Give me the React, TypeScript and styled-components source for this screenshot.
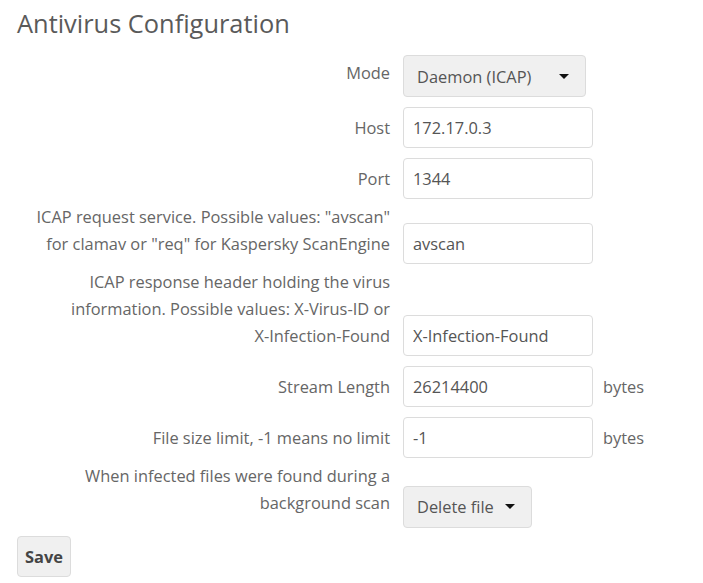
import React from "react";
import styled, { createGlobalStyle } from "styled-components";

const Global = createGlobalStyle`
  html, body { margin: 0; padding: 0; background: #fff; }
  body { font-family: "Open Sans", "Liberation Sans", sans-serif; color: #555; }
  * { box-sizing: border-box; }
`;

const Page = styled.div`
  padding: 4px 17px 0 17px;
`;

const Title = styled.h1`
  margin: 0 0 8px 0;
  font-size: 25.4px;
  line-height: 38px;
  font-weight: 400;
  color: #5a5a5a;
`;

const Form = styled.form`
  display: flex;
  flex-direction: column;
`;

const Row = styled.div`
  display: flex;
  align-items: last baseline;
  padding-left: 18px;
`;

const Label = styled.label`
  flex: 0 0 auto;
  width: 368px;
  margin-top: -1px;
  padding-right: 13px;
  text-align: right;
  font-size: 16.4px;
  line-height: 27px;
  color: #666;
`;

const NoWrap = styled.span`
  white-space: nowrap;
`;

const TextInput = styled.input`
  width: 190px;
  height: 41px;
  margin: 5px 0;
  padding: 0 9px;
  border: 1px solid #dcdcdc;
  border-radius: 4px;
  font-family: "Open Sans", "Liberation Sans", sans-serif;
  font-size: 16.4px;
  color: #555;
  background: #fff;
  outline: none;
`;

const Select = styled.button<{ $w: number }>`
  display: flex;
  align-items: center;
  justify-content: space-between;
  width: ${(p) => p.$w}px;
  height: 42px;
  margin: 5px 0;
  padding: 0 16px 0 13px;
  border: 1px solid #dcdcdc;
  border-radius: 4px;
  background: #f0f0f0;
  font-family: "Open Sans", "Liberation Sans", sans-serif;
  font-size: 16.4px;
  color: #555;
  cursor: pointer;
`;

const Caret = styled.span`
  width: 0;
  height: 0;
  border-left: 5px solid transparent;
  border-right: 5px solid transparent;
  border-top: 5px solid #111;
`;

const Unit = styled.span`
  padding-left: 10px;
  font-size: 16.4px;
  line-height: 27px;
  color: #666;
`;

const SaveButton = styled.button`
  margin-top: 3px;
  align-self: flex-start;
  width: 54px;
  height: 41px;
  border: 1px solid #dcdcdc;
  border-radius: 4px;
  background: #f0f0f0;
  font-family: "Open Sans", "Liberation Sans", sans-serif;
  font-weight: 700;
  font-size: 16.4px;
  color: #444;
  padding: 0;
`;

type Field = {
  label: React.ReactNode;
  key: string;
  kind: "input" | "select";
  value: string;
  width?: number;
  unit?: string;
};

const fields: Field[] = [
  { key: "mode", label: "Mode", kind: "select", value: "Daemon (ICAP)", width: 183 },
  { key: "host", label: "Host", kind: "input", value: "172.17.0.3" },
  { key: "port", label: "Port", kind: "input", value: "1344" },
  {
    key: "req",
    label: 'ICAP request service. Possible values: "avscan" for clamav or "req" for Kaspersky ScanEngine',
    kind: "input",
    value: "avscan",
  },
  {
    key: "resp",
    label: (
      <>
        ICAP response header holding the virus information. Possible values: <NoWrap>X-Virus-ID</NoWrap> or{" "}
        <NoWrap>X-Infection-Found</NoWrap>
      </>
    ),
    kind: "input",
    value: "X-Infection-Found",
  },
  { key: "stream", label: "Stream Length", kind: "input", value: "26214400", unit: "bytes" },
  { key: "size", label: "File size limit, -1 means no limit", kind: "input", value: "-1", unit: "bytes" },
  {
    key: "infected",
    label: "When infected files were found during a background scan",
    kind: "select",
    value: "Delete file",
    width: 129,
  },
];

export default function App() {
  return (
    <>
      <Global />
      <Page>
        <Title>Antivirus Configuration</Title>
        <Form onSubmit={(e) => e.preventDefault()}>
          {fields.map((f) => (
            <Row key={f.key}>
              <Label>{f.label}</Label>
              {f.kind === "input" ? (
                <TextInput defaultValue={f.value} />
              ) : (
                <Select type="button" $w={f.width ?? 180}>
                  <span>{f.value}</span>
                  <Caret />
                </Select>
              )}
              {f.unit && <Unit>{f.unit}</Unit>}
            </Row>
          ))}
          <SaveButton type="submit">Save</SaveButton>
        </Form>
      </Page>
    </>
  );
}
